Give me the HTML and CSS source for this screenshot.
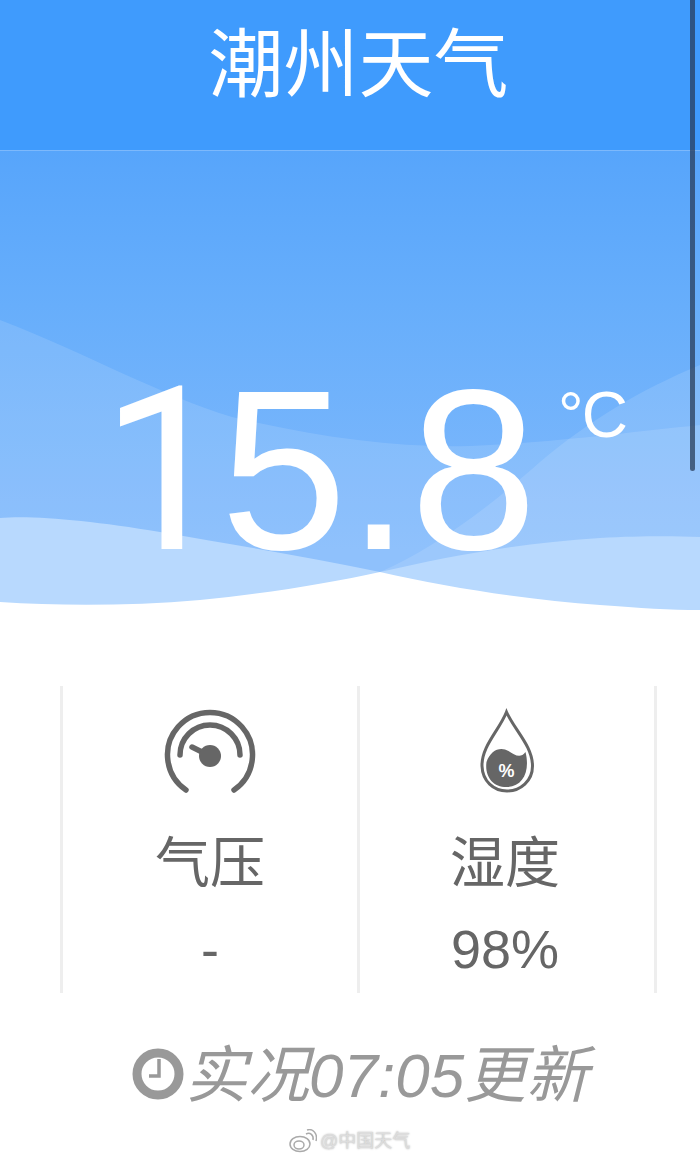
FILE: index.html
```html
<!DOCTYPE html>
<html lang="zh-CN">
<head>
    <meta charset="UTF-8">
    <meta name="viewport" content="width=device-width, initial-scale=1.0">
    <title>潮州天气</title>
    <link rel="stylesheet" href="styles.css">
</head>
<body>
    <div class="page">
        <header class="title-bar"><h1>潮州天气</h1></header>

        <section class="hero">
            <svg class="waves" viewBox="0 151 700 469" preserveAspectRatio="none">
                <path class="wave-light" d="M0 320 C90 355 160 395 232 417 C320 438 400 448 470 446 C560 442 630 432 700 425 V620 H0 Z"/>
                <path class="wave-light" d="M700 365 C640 390 590 420 540 462 C480 515 430 550 380 572 L300 620 H700 Z"/>
                <path class="wave-front" d="M0 518 C30 515 90 520 160 532 C240 546 310 557 380 572 C450 556 520 543 600 538 C640 536 670 536 700 537 V620 H0 Z"/>
                <path class="wave-base" d="M0 602 C60 606 130 606 200 600 C270 593 330 583 380 572 C450 588 530 600 600 605 C640 608 670 610 700 610 V620 H0 Z"/>
            </svg>
            <div class="temp">
                <span class="temp-value"><span class="temp-first">1</span>5.8</span>
                <span class="temp-unit">°C</span>
            </div>
        </section>

        <section class="stats">
            <div class="stat">
                <svg class="stat-icon" viewBox="0 0 100 100">
                    <path class="gauge-line" d="M26 84 A42.5 42.5 0 1 1 74 84"/>
                    <path class="gauge-line" d="M20 49 A30 30 0 0 1 80 49"/>
                    <path class="gauge-line" d="M32 41 L50 50"/>
                    <circle class="gauge-hub" cx="50" cy="50" r="11"/>
                </svg>
                <div class="stat-name">气压</div>
                <div class="stat-value">-</div>
            </div>
            <div class="stat">
                <svg class="stat-icon" viewBox="-1.5 0 100 100">
                    <path class="drop-line" d="M50 6 C43 24 25 40 25.5 60 C26 75 37 85 50.5 85 C64 85 76 75 76 60 C76 40 58 24 50 6 Z"/>
                    <path class="drop-fill" d="M30 56 C34 44 44 40 52 45 C58 49 64 53 69 46 C74 66 66 81 50 81 C36 81 28 70 30 56 Z"/>
                    <text class="drop-text" x="50" y="71">%</text>
                </svg>
                <div class="stat-name">湿度</div>
                <div class="stat-value">98%</div>
            </div>
        </section>

        <footer class="update">
            <svg class="clock" viewBox="0 0 52 52">
                <circle cx="26" cy="26" r="21" fill="none" stroke="#999" stroke-width="9"/>
                <path d="M27 11 V28 H17" fill="none" stroke="#999" stroke-width="3.5"/>
            </svg>
            <span class="update-text">实况07:05更新</span>
        </footer>

        <div class="mark">
            <svg class="mark-logo" viewBox="0 0 28 24">
                <ellipse cx="11" cy="15" rx="10" ry="7.5"/>
                <ellipse cx="10" cy="16" rx="5" ry="4"/>
                <path d="M17 5 C21 3 25 6 24 11"/>
                <path d="M18 1 C24 -1 29 5 27 12"/>
            </svg>
            <span>@中国天气</span>
        </div>

        <div class="scrollbar"></div>
    </div>
</body>
</html>
```

FILE: styles.css
```css
* {
    box-sizing: border-box;
}
html, body {
    margin: 0;
    height: 100%;
    overflow: hidden;
    background: #fff;
}
.page {
    position: relative;
    height: 1157px;
    font-family: "Liberation Sans", "Noto Sans CJK SC", sans-serif;
}
.title-bar {
    height: 151px;
    padding: 0 0 20px 17px;
    background: #3f9bfd;
    border-bottom: 1px solid #7db9fc;
    display: flex;
    align-items: center;
    justify-content: center;
}
.title-bar h1 {
    margin: 0;
    font-size: 75px;
    font-weight: 400;
    line-height: 1;
    color: #fff;
}
.hero {
    position: relative;
    height: 469px;
    background: linear-gradient(180deg, #57a5fb 0%, #67aefb 33%, #80b9fc 85%);
}
.waves {
    position: absolute;
    left: 0;
    top: 0;
    width: 100%;
    height: 100%;
}
.wave-light {
    fill: #fff;
    fill-opacity: 0.12;
}
.wave-front {
    fill: #b8d9fe;
}
.wave-base {
    fill: #fff;
}
.temp {
    position: relative;
    display: flex;
    align-items: flex-start;
    padding: 205px 0 0 101px;
    color: #fff;
}
.temp-value {
    font-size: 228px;
    line-height: 1;
}
/* the leading 1 has no foot serif */
.temp-first {
    font-family: Roboto, sans-serif;
    margin-right: -9px;
}
.temp-unit {
    margin: 27px 0 0 21px;
    font-size: 64px;
    letter-spacing: -2px;
    line-height: 1;
}
.stats {
    display: grid;
    grid-template-columns: 297px 300px;
    margin: 66px 0 0 60px;
    height: 307px;
}
.stat {
    border-left: 3px solid #eee;
    text-align: center;
    color: #666;
    padding-top: 20px;
}
.stat + .stat {
    border-right: 3px solid #eee;
    padding-right: 4px;
}
.stat-icon {
    display: block;
    width: 100px;
    height: 100px;
    margin: 0 auto;
}
.gauge-line {
    fill: none;
    stroke: #666;
    stroke-width: 5.5;
    stroke-linecap: round;
}
.gauge-hub {
    fill: #666;
}
.drop-line {
    fill: none;
    stroke: #666;
    stroke-width: 3;
}
.drop-fill {
    fill: #666;
}
.drop-text {
    fill: #fff;
    font-size: 18px;
    font-weight: bold;
    text-anchor: middle;
}
.stat-name {
    margin-top: 25px;
    font-size: 55px;
    font-weight: 400;
    line-height: 64px;
}
.stat-value {
    margin-top: 22px;
    font-size: 54px;
    line-height: 64px;
}
.update {
    display: flex;
    align-items: center;
    margin: 48px 0 0 132px;
    color: #999;
}
.clock {
    width: 52px;
    height: 52px;
    margin: 0 1px 4px 0;
}
.update-text {
    font-size: 62px;
    font-style: italic;
    line-height: 70px;
}
.mark {
    display: flex;
    align-items: center;
    gap: 3px;
    margin: 18px 0 0 289px;
    font-size: 18px;
    line-height: 24px;
    color: #ddd;
    text-shadow: 0 0 2px #aaa;
}
.mark-logo {
    width: 28px;
    height: 24px;
    fill: none;
    stroke: #aaa;
    stroke-width: 1.5;
}
/* thin scroll indicator on the right edge */
.scrollbar {
    position: absolute;
    top: 0;
    right: 5px;
    width: 5px;
    height: 471px;
    border-radius: 0 0 3px 3px;
    background: rgba(40, 60, 90, 0.75);
}
```
